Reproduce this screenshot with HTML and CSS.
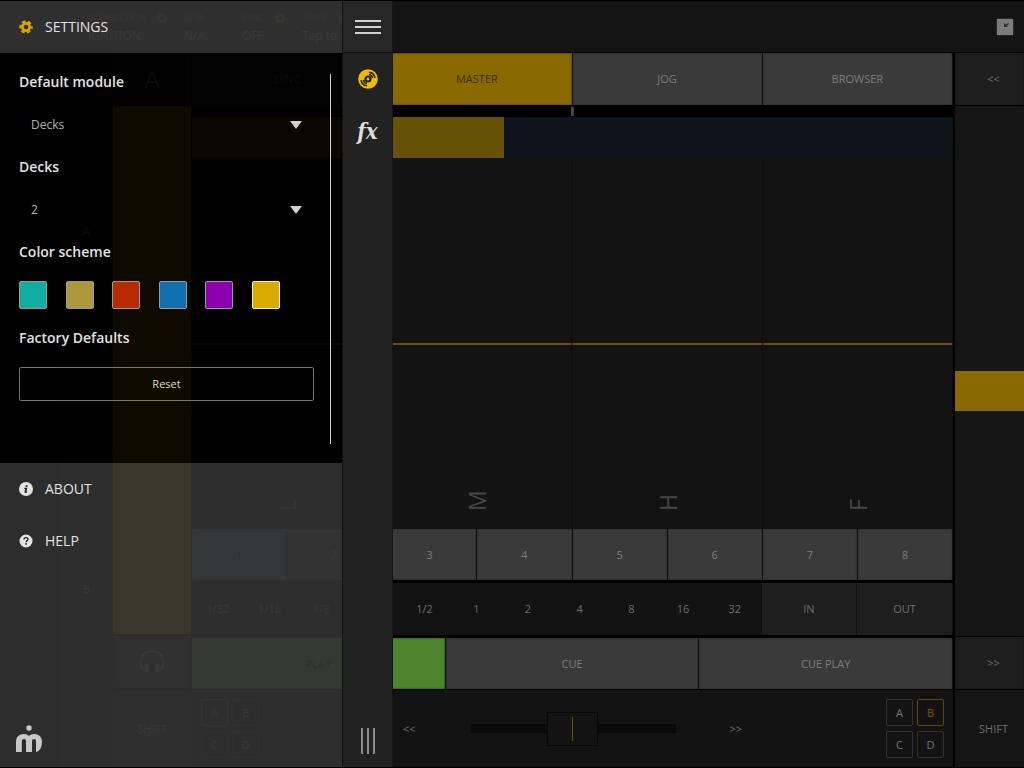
FILE: index.html
```
<!DOCTYPE html>
<html lang="en">
<head>
<meta charset="utf-8">
<meta name="viewport" content="width=device-width, initial-scale=1">
<title>Settings</title>
<link rel="stylesheet" href="styles.css">
</head>
<body>
<svg class="defs" aria-hidden="true">
  <symbol id="gear" viewBox="0 0 14 14"><g fill="none" stroke="currentColor"><circle cx="7" cy="7" r="3.700" stroke-width="2.800"/><circle cx="7" cy="7" r="5.500" stroke-width="2.400" stroke-dasharray="3.400 2.360" stroke-dashoffset="1.700"/></g></symbol>
</svg>
<main class="app">
  <header class="status">
    <dl class="stat"><dt>CONNECTION <svg class="mini"><use href="#gear"/></svg></dt><dd>IGNITION</dd></dl>
    <dl class="stat"><dt>BPM</dt><dd>N/A</dd></dl>
    <dl class="stat"><dt>SYNC <svg class="mini"><use href="#gear"/></svg></dt><dd>OFF</dd></dl>
    <dl class="stat"><dt>STATE <svg class="mini"><use href="#gear"/></svg></dt><dd>Tap to start</dd></dl>
    <button class="fullscreen" aria-label="Exit full screen"><svg viewBox="0 0 16 16"><rect width="16" height="16" fill="#7b7b7b"/><path d="M7 4v4h4L9.800 6.800 12 5l-1-1-2.200 1.800z" fill="#303030"/></svg></button>
  </header>
  <div class="decks">
    <div class="edge"></div>
    <div class="cross"><span>A</span><span>B</span></div>
    <section class="strip">
      <button class="deck-name">A</button>
      <div class="level"></div>
      <button class="raised" aria-label="Headphones"><svg class="phones" viewBox="0 0 24 24"><path d="M4 20C-2 10 4 2 12 2s14 8 8 18" fill="none" stroke="currentColor" stroke-width="2"/><path d="M5 14l4-1v9l-4-1zM19 14l-4-1v9l4-1z" fill="currentColor"/></svg></button>
      <button class="shift">SHIFT</button>
    </section>
    <section class="deck">
      <nav class="row tabs">
        <button class="key dark">SYNC</button><button class="key on">MASTER</button><button class="key">JOG</button><button class="key">BROWSER</button>
      </nav>
      <div class="phase"><i></i></div>
      <div class="overview"><i></i></div>
      <div class="bands"><span>L</span><span>M</span><span>H</span><span>F</span></div>
      <div class="row pads">
        <button class="key cue">1</button><button class="key">2</button><button class="key">3</button><button class="key">4</button><button class="key">5</button><button class="key">6</button><button class="key">7</button><button class="key">8</button>
      </div>
      <div class="row loops">
        <div class="row sizes"><button>1/32</button><button>1/16</button><button>1/8</button><button>1/4</button><button>1/2</button><button>1</button><button>2</button><button>4</button><button>8</button><button>16</button><button>32</button></div>
        <button class="key dark">IN</button><button class="key dark">OUT</button>
      </div>
      <div class="row play">
        <button class="key go">PLAY</button><button class="key">CUE</button><button class="key">CUE PLAY</button>
      </div>
      <div class="mix">
        <div class="assign"><button class="on">A</button><button>B</button><button>C</button><button>D</button></div>
        <div class="fade"><button>&lt;&lt;</button><input type="range" aria-label="Crossfader"><button>&gt;&gt;</button></div>
        <div class="assign"><button>A</button><button class="on">B</button><button>C</button><button>D</button></div>
      </div>
    </section>
    <section class="strip right">
      <button class="raised">&lt;&lt;</button>
      <input class="pitch" type="range" value="54" aria-label="Pitch">
      <button class="raised">&gt;&gt;</button>
      <button class="shift">SHIFT</button>
    </section>
  </div>
</main>
<aside class="drawer">
  <div class="menu">
    <button class="item"><svg class="icon gold"><use href="#gear"/></svg>SETTINGS</button>
    <div class="settings">
      <form class="fields">
        <div class="field"><label for="module">Default module</label>
          <div class="pick"><select id="module"><option>Decks</option></select><svg viewBox="0 0 12 8"><path d="M0 0h12L6 8z" fill="#d4d1ca"/></svg></div></div>
        <div class="field"><label for="count">Decks</label>
          <div class="pick"><select id="count"><option>2</option></select><svg viewBox="0 0 12 8"><path d="M0 0h12L6 8z" fill="#d4d1ca"/></svg></div></div>
        <fieldset class="field"><legend>Color scheme</legend>
          <div class="swatches">
            <input class="teal" type="radio" name="scheme" aria-label="Teal">
            <input class="sand" type="radio" name="scheme" aria-label="Sand">
            <input class="red" type="radio" name="scheme" aria-label="Red">
            <input class="blue" type="radio" name="scheme" aria-label="Blue">
            <input class="purple" type="radio" name="scheme" aria-label="Purple">
            <input class="yellow" type="radio" name="scheme" aria-label="Yellow" checked>
          </div></fieldset>
        <div class="field last"><h2>Factory Defaults</h2><button type="button" class="reset">Reset</button></div>
      </form>
    </div>
    <button class="item"><svg class="icon" viewBox="0 0 14 14"><circle cx="7" cy="7" r="7" fill="#e4e4e4"/><path d="M6.800 3.200h1.900L8.300 4.900H6.500zM5.400 5.800h2.900L7.400 9.700h1l-.3 1.100H5.300l.9-3.900h-1z" fill="#222"/></svg>ABOUT</button>
    <button class="item"><svg class="icon" viewBox="0 0 14 14"><circle cx="7" cy="7" r="6.500" fill="#e4e4e4"/><path d="M5 5.600C5 3 9 3 9 5.300c0 1.400-1.900 1.300-1.900 2.900" fill="none" stroke="#222" stroke-width="1.300"/><circle cx="7.100" cy="9.900" r=".9" fill="#222"/></svg>HELP</button>
    <footer class="brand"><svg class="logo" viewBox="0 0 26 30" role="img" aria-label="Logo"><circle cx="13" cy="5" r="2.700"/><path d="M0 29V19c0-5 3-8 8-8 2 0 4 .8 5 2 1-1.200 3-2 5-2 5 0 8 3 8 8 0 5-2 9-6 10V18q0-2-2-2t-2 2v11h-6V18q0-2-2-2t-2.200 2v11z"/></svg></footer>
  </div>
  <nav class="rail">
    <button class="burger" aria-label="Menu"><i></i><i></i><i></i></button>
    <button class="tool" aria-label="Decks"><svg class="disc" viewBox="0 0 20 20"><circle cx="10" cy="10" r="9.800" fill="#eebb05"/><circle cx="10" cy="10" r="2.500" fill="none" stroke="#222" stroke-width="2.200"/><g fill="none" stroke="#222" stroke-width="1.500"><path d="M11 3.200c3 .3 5.500 2.500 5.900 5.600M11 5.600c2 .3 3.300 1.700 3.600 3.400M9 16.800c-3-.3-5.500-2.500-5.900-5.600M9 14.400c-2-.3-3.300-1.700-3.600-3.400"/></g></svg></button>
    <button class="tool fx">fx</button>
    <div class="grip"><i></i><i></i><i></i></div>
  </nav>
</aside>
</body>
</html>
```
FILE: styles.css
```
* { box-sizing: border-box; margin: 0; padding: 0; }
body { background: #000; color: #6e6e6e; font: 11px/16px "Open Sans", "Noto Sans", sans-serif; overflow: hidden; }
button { background: none; border: 0; color: inherit; font: inherit; }
.defs { position: absolute; width: 0; height: 0; }

.app { height: 100vh; padding: 1px 0; display: flex; flex-direction: column; text-shadow: 0 0 2px rgba(128, 128, 128, .4); }
.status { flex: 0 0 51px; background: #141414; display: grid; grid-template-columns: 96px 58px 60px 1fr 16px; align-items: center; padding: 0 11px 0 88px; margin-bottom: 1px; }
.stat { white-space: nowrap; padding-top: 3px; }
.stat dt { color: #6b5000; font-size: 9px; display: flex; align-items: center; gap: 10px; }
.stat dd { font-size: 12px; line-height: 20px; }
.mini { width: 12px; height: 12px; }
.fullscreen { width: 16px; height: 16px; box-shadow: 0 0 2px #555; }
.fullscreen svg { display: block; }

.decks { flex: 1; min-height: 0; display: grid; grid-template-columns: 60px 53px 79px 1fr 70px; }
.edge { background: #030303; }
.cross { background: #0f0f0f; display: flex; flex-direction: column; justify-content: space-between; align-items: center; padding: 170px 0; }
.strip { display: flex; flex-direction: column; gap: 2px; min-height: 0; padding-right: 1px; }
.deck-name { height: 51px; font-size: 24px; background: #1d1d1d; }
.level { flex: 1; background: #8a6a00; }
.raised { height: 52px; background: #1e1e1e; box-shadow: inset 0 0 2px #101010; }
.phones { display: block; margin: auto; width: 26px; height: 26px; }
.shift { height: 77px; background: #151515; }
.right { padding: 0; border-left: 1px solid #000; gap: 1px; }
.right button { padding-left: 8px; }
.pitch { appearance: none; writing-mode: vertical-lr; flex: 1; min-height: 0; width: 100%; background: #161616; }
.pitch::-webkit-slider-runnable-track { width: 100%; }
.pitch::-webkit-slider-thumb { appearance: none; width: 70px; height: 40px; background: #8a6a00; }

.deck { display: flex; flex-direction: column; min-height: 0; min-width: 0; border-right: 1px solid #000; }
.row { display: flex; }
.row > * { flex: 1 1 0; min-width: 0; }
.key { background: #3a3a3a; border-right: 1px solid #101010; box-shadow: inset 0 0 2px #242424; color: #7c7c7c; }
.key.on { background: #8a6a00; color: #3a2d00; }
.key.dark { background: #1e1e1e; color: #6e6e6e; }
.key.cue { background: #47667a; color: #111; }
.key.go { background: #50852f; color: #111; }
.tabs { height: 52px; }
.phase { height: 12px; padding-top: 2px; display: flex; justify-content: center; }
.phase i { width: 3px; height: 9px; background: #444; }
.overview { height: 41px; background: #0d141b; }
.overview i { display: block; width: 41%; height: 100%; background: #675106; }
.bands { flex: 1; min-height: 0; display: grid; grid-template-columns: repeat(4, 1fr); background: linear-gradient(#6b5005, #6b5005) 0 50% / 100% 2px no-repeat #131313; }
.bands span { display: flex; justify-content: flex-start; align-items: center; writing-mode: vertical-rl; transform: rotate(180deg); font-size: 23px; color: #464646; text-shadow: none; padding-top: 18px; border-left: 1px solid #0c0c0c; }
.pads { height: 51px; }
.loops { height: 58px; padding: 3px 0; }
.loops .sizes { flex: 6 1 0; background: #131313; border-right: 1px solid #0c0c0c; }
.play { height: 51px; }
.mix { height: 77px; margin-top: 1px; background: #131313; display: flex; align-items: center; justify-content: space-between; padding: 0 9px; }
.assign { display: grid; grid-template-columns: 27px 27px; gap: 5px 4px; }
.assign button { height: 27px; border: 1px solid #303030; border-radius: 2px; color: #747474; }
.assign .on { border-color: #5c4703; color: #665005; text-shadow: 0 0 2px #443502; }
.fade { display: flex; align-items: center; gap: 54px; }
.fade input { appearance: none; width: 206px; height: 34px; background: linear-gradient(#0a0a0a, #0a0a0a) 0 50% / 100% 9px no-repeat; }
.fade input::-webkit-slider-thumb { appearance: none; width: 51px; height: 34px; border: 1px solid #080808; background: linear-gradient(#6b5005, #6b5005) 50% 50% / 1px 24px no-repeat #131313; }

.drawer { position: absolute; top: 1px; bottom: 1px; left: 0; display: flex; color: #e2e2e2; }
.menu { width: 343px; display: flex; flex-direction: column; border-right: 1px solid #101010; }
.item { flex: none; height: 52px; display: flex; align-items: center; gap: 12px; padding-left: 19px; font-size: 14px; background: rgba(50, 50, 50, .9); }
.icon { width: 14px; height: 14px; }
.gold { color: #d8a600; }
.settings { flex: none; height: 410px; background: rgba(0, 0, 0, .9); padding: 21px 11px 19px 19px; }
.fields { height: 100%; border-right: 1px solid #d0d0d0; padding-right: 16px; }
.field { border: 0; margin-bottom: 17px; }
.field label, .field legend, .field h2 { display: block; font-size: 14px; line-height: 16px; font-weight: 600; margin-bottom: 18px; }
.pick { display: grid; align-items: center; height: 34px; }
.pick > * { grid-area: 1 / 1; }
.pick select { appearance: none; background: none; border: 0; color: #b5b5b5; font: inherit; font-size: 12px; height: 34px; padding-left: 12px; }
.pick svg { width: 12px; height: 8px; justify-self: end; margin-right: 12px; pointer-events: none; }
.swatches { height: 34px; display: flex; align-items: center; justify-content: space-between; padding-right: 34px; }
.swatches input { appearance: none; width: 28px; height: 28px; border: 1px solid #999; border-radius: 2px; }
.swatches input:checked { border-color: #fff1b8; }
.teal { background: #12ada2; }
.sand { background: #ad983b; }
.red { background: #b72b02; }
.blue { background: #0f70ad; }
.purple { background: #8d00ad; }
.yellow { background: #d9aa02; }
.last { margin: 0; padding-top: 1px; }
.last h2 { margin-bottom: 21px; }
.reset { width: 100%; height: 34px; border: 1px solid #777; border-radius: 2px; color: #dedbd2; }
.brand { flex: 1; display: flex; align-items: flex-end; padding: 0 0 14px 16px; background: rgba(50, 50, 50, .9); }
.logo { width: 26px; height: 30px; fill: #c8c8c8; }

.rail { width: 50px; background: #222; border-right: 1px solid #171717; display: flex; flex-direction: column; align-items: center; }
.burger { width: 100%; height: 52px; background: #272727; border-bottom: 1px solid #111; display: flex; flex-direction: column; align-items: center; justify-content: center; gap: 4px; }
.burger i { width: 26px; height: 2px; background: #d0d0d0; }
.tool { height: 52px; width: 100%; }
.disc { width: 20px; height: 20px; display: block; margin: auto; }
.fx { font: italic bold 22px/40px "DejaVu Serif Condensed", "DejaVu Serif", serif; color: #ddd; }
.grip { margin-top: auto; padding-bottom: 13px; display: flex; gap: 4px; }
.grip i { width: 2px; height: 26px; background: #8c8c8c; }
```
